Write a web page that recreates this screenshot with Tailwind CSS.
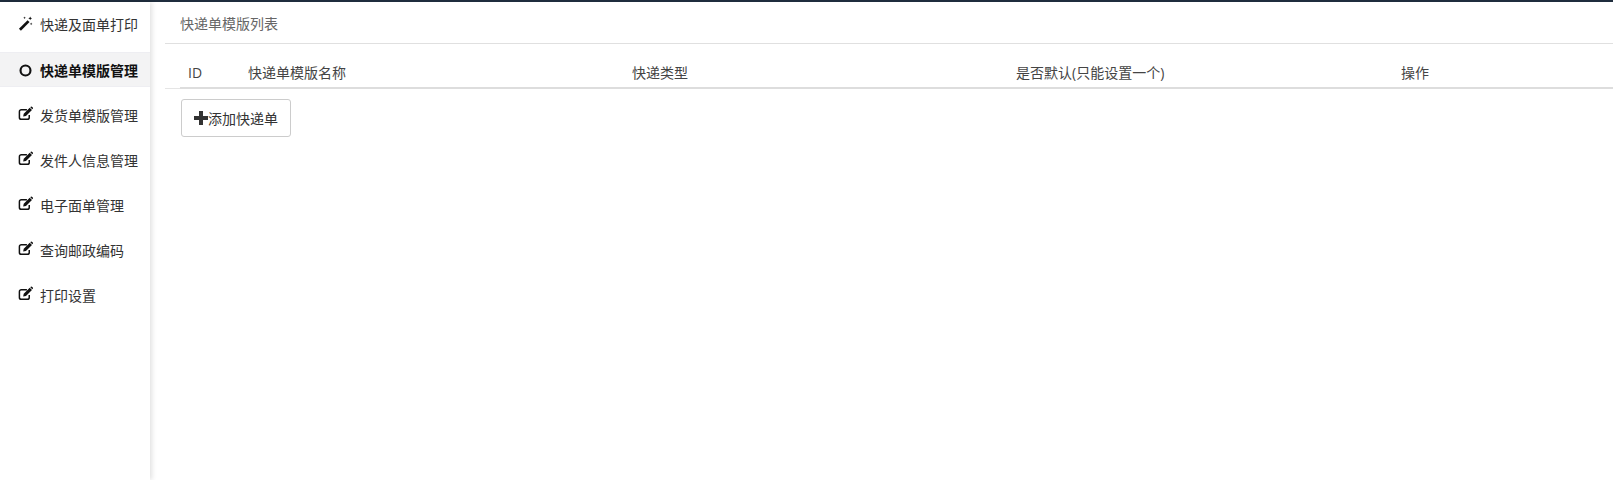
<!DOCTYPE html>
<html lang="zh-CN">
<head>
  <meta charset="UTF-8" />
  <title>快递单模版列表</title>
  <script src="https://cdn.jsdelivr.net/npm/@tailwindcss/browser@4"></script>
</head>
<body class="h-[480px] overflow-hidden bg-white text-[14px] text-[#333] font-['Open_Sans','Noto_Sans_CJK_SC',sans-serif]">
  <div class="h-[2px] bg-[#1f2d3d]"></div>
  <div class="flex h-[478px]">
    <!-- sidebar -->
    <aside class="w-[150px] shrink-0 shadow-[2px_0_5px_rgba(0,0,0,0.12)] pt-[1px]">
      <a class="flex h-[49px] items-center gap-[7px] pl-[18px] pb-[6px]">
        <svg class="w-[15px] h-[15px] -mt-[3px]" viewBox="0 0 16 16" fill="#111"><path d="M1 13.600 10.200 4.400l2.100 2.100-9.200 9.200z"/><path d="M13 .5l.6 1.400 1.400.6-1.400.6-.6 1.400-.6-1.400-1.400-.6 1.400-.6zM7 .5l.4 1 1 .4-1 .4-.4 1-.4-1-1-.4 1-.4zM14 7l.4 1 1 .4-1 .4-.4 1-.4-1-1-.4 1-.4z"/></svg>
        <span>快递及面单打印</span>
      </a>
      <a class="flex h-[35px] items-center gap-[7px] pl-[18px] pt-[1px] bg-[#f3f3f4] border-y border-[#eeeef2] font-bold text-[#111]">
        <svg class="w-[15px] h-[15px]" viewBox="0 0 16 16" fill="none" stroke="#111" stroke-width="2.300"><circle cx="8" cy="8" r="5.300"/></svg>
        <span>快递单模版管理</span>
      </a>
      <nav class="flex flex-col">
        <a class="flex h-[45px] items-center gap-[7px] pl-[18px] pt-[11px]">
          <svg class="w-[15px] h-[15px] -mt-[3px]" viewBox="0 0 16 16"><path d="M12 9.500v2.700a2 2 0 0 1-2 2H3.500a2 2 0 0 1-2-2V6a2 2 0 0 1 2-2h6" fill="none" stroke="#111" stroke-width="1.600"/><path d="M5.500 11.200l.6-3 6.400-6.400 2.400 2.400-6.400 6.400zM13.100 1.300l.6-.6a.8.800 0 0 1 1.100 0l1 1a.8.800 0 0 1 0 1.100l-.6.6z" fill="#111"/></svg>
          <span>发货单模版管理</span>
        </a>
        <a class="flex h-[45px] items-center gap-[7px] pl-[18px] pt-[11px]">
          <svg class="w-[15px] h-[15px] -mt-[3px]" viewBox="0 0 16 16"><path d="M12 9.500v2.700a2 2 0 0 1-2 2H3.500a2 2 0 0 1-2-2V6a2 2 0 0 1 2-2h6" fill="none" stroke="#111" stroke-width="1.600"/><path d="M5.500 11.200l.6-3 6.400-6.400 2.400 2.400-6.400 6.400zM13.100 1.300l.6-.6a.8.800 0 0 1 1.100 0l1 1a.8.800 0 0 1 0 1.100l-.6.6z" fill="#111"/></svg>
          <span>发件人信息管理</span>
        </a>
        <a class="flex h-[45px] items-center gap-[7px] pl-[18px] pt-[11px]">
          <svg class="w-[15px] h-[15px] -mt-[3px]" viewBox="0 0 16 16"><path d="M12 9.500v2.700a2 2 0 0 1-2 2H3.500a2 2 0 0 1-2-2V6a2 2 0 0 1 2-2h6" fill="none" stroke="#111" stroke-width="1.600"/><path d="M5.500 11.200l.6-3 6.400-6.400 2.400 2.400-6.400 6.400zM13.100 1.300l.6-.6a.8.800 0 0 1 1.100 0l1 1a.8.800 0 0 1 0 1.100l-.6.6z" fill="#111"/></svg>
          <span>电子面单管理</span>
        </a>
        <a class="flex h-[45px] items-center gap-[7px] pl-[18px] pt-[11px]">
          <svg class="w-[15px] h-[15px] -mt-[3px]" viewBox="0 0 16 16"><path d="M12 9.500v2.700a2 2 0 0 1-2 2H3.500a2 2 0 0 1-2-2V6a2 2 0 0 1 2-2h6" fill="none" stroke="#111" stroke-width="1.600"/><path d="M5.500 11.200l.6-3 6.400-6.400 2.400 2.400-6.400 6.400zM13.100 1.300l.6-.6a.8.800 0 0 1 1.100 0l1 1a.8.800 0 0 1 0 1.100l-.6.6z" fill="#111"/></svg>
          <span>查询邮政编码</span>
        </a>
        <a class="flex h-[45px] items-center gap-[7px] pl-[18px] pt-[11px]">
          <svg class="w-[15px] h-[15px] -mt-[3px]" viewBox="0 0 16 16"><path d="M12 9.500v2.700a2 2 0 0 1-2 2H3.500a2 2 0 0 1-2-2V6a2 2 0 0 1 2-2h6" fill="none" stroke="#111" stroke-width="1.600"/><path d="M5.500 11.200l.6-3 6.400-6.400 2.400 2.400-6.400 6.400zM13.100 1.300l.6-.6a.8.800 0 0 1 1.100 0l1 1a.8.800 0 0 1 0 1.100l-.6.6z" fill="#111"/></svg>
          <span>打印设置</span>
        </a>
      </nav>
    </aside>

    <!-- main -->
    <main class="flex-1 min-w-0 pl-[15px]">
      <div class="h-[42px] border-b border-[#e0e0e0] pl-[15px] pt-[2px] flex items-center text-[#666]">快递单模版列表</div>
      <div class="border-b border-[#e5e5e5] mt-[14px]">
        <div class="grid grid-cols-[60px_384px_384px_385px_1fr] ml-[15px] h-[31px] items-center border-b-2 border-[#ddd] -mb-[1px] text-[#444]">
          <span class="pl-[8px]">ID</span>
          <span class="pl-[8px]">快递单模版名称</span>
          <span class="pl-[8px]">快递类型</span>
          <span class="pl-[8px]">是否默认(只能设置一个)</span>
          <span class="pl-[8px]">操作</span>
        </div>
      </div>
      <button class="ml-[16px] mt-[10px] w-[110px] h-[38px] flex items-center justify-center border border-[#ccc] rounded-[3px] bg-white text-[#333]">
        <svg class="w-[14px] h-[14px]" viewBox="0 0 14 14" fill="#333"><path d="M5 0h4v5h5v4H9v5H5V9H0V5h5z"/></svg>
        <span>添加快递单</span>
      </button>
    </main>
  </div>
</body>
</html>
